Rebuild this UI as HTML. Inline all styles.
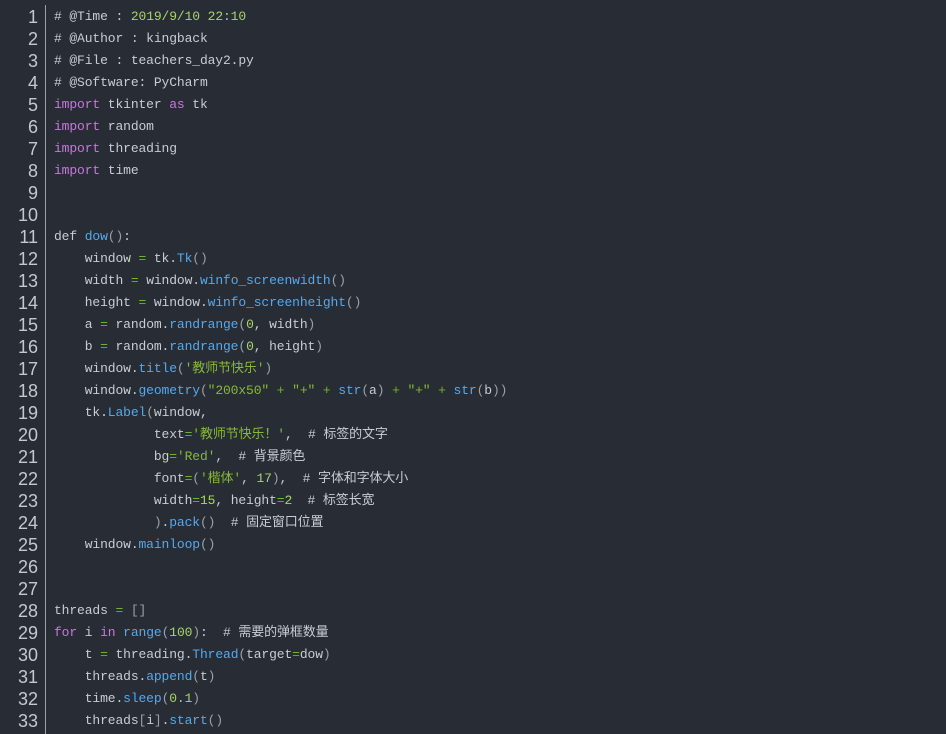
<!DOCTYPE html><html><head><meta charset="utf-8"><style>
body{margin:0;width:946px;height:734px;background:#282c34;overflow:hidden;font-family:"Liberation Mono","Noto Sans CJK SC",monospace;}
.g{position:absolute;left:0;top:6px;width:38px;text-align:right;color:#c5c8ce;font-family:"Liberation Sans",sans-serif;font-size:18px;}
.g div,.c div{height:22px;line-height:22px;white-space:pre}
.bar{position:absolute;left:45px;top:5px;width:1px;height:729px;background:#9aa0a8}
.c{position:absolute;left:54px;top:6px;color:#c7ccd5;font-size:13px;letter-spacing:-0.12px}
.k{color:#c678dd}.f{color:#55a9ee}.s{color:#86b936}.n{color:#a8d46b}.o{color:#6db52b}.p{color:#9aa0a8}
</style></head><body>
<div class="g"><div>1</div><div>2</div><div>3</div><div>4</div><div>5</div><div>6</div><div>7</div><div>8</div><div>9</div><div>10</div><div>11</div><div>12</div><div>13</div><div>14</div><div>15</div><div>16</div><div>17</div><div>18</div><div>19</div><div>20</div><div>21</div><div>22</div><div>23</div><div>24</div><div>25</div><div>26</div><div>27</div><div>28</div><div>29</div><div>30</div><div>31</div><div>32</div><div>33</div></div>
<div class="bar"></div>
<div class="c">
<div># @Time : <span class="n">2019/9/10 22:10</span></div>
<div># @Author : kingback</div>
<div># @File : teachers_day2.py</div>
<div># @Software: PyCharm</div>
<div><span class="k">import</span> tkinter <span class="k">as</span> tk</div>
<div><span class="k">import</span> random</div>
<div><span class="k">import</span> threading</div>
<div><span class="k">import</span> time</div>
<div></div>
<div></div>
<div>def <span class="f">dow</span><span class="p">()</span>:</div>
<div>    window <span class="o">=</span> tk.<span class="f">Tk</span><span class="p">()</span></div>
<div>    width <span class="o">=</span> window.<span class="f">winfo_screenwidth</span><span class="p">()</span></div>
<div>    height <span class="o">=</span> window.<span class="f">winfo_screenheight</span><span class="p">()</span></div>
<div>    a <span class="o">=</span> random.<span class="f">randrange</span><span class="p">(</span><span class="n">0</span>, width<span class="p">)</span></div>
<div>    b <span class="o">=</span> random.<span class="f">randrange</span><span class="p">(</span><span class="n">0</span>, height<span class="p">)</span></div>
<div>    window.<span class="f">title</span><span class="p">(</span><span class="s">'教师节快乐'</span><span class="p">)</span></div>
<div>    window.<span class="f">geometry</span><span class="p">(</span><span class="s">"200x50"</span> <span class="o">+</span> <span class="s">"+"</span> <span class="o">+</span> <span class="f">str</span><span class="p">(</span>a<span class="p">)</span> <span class="o">+</span> <span class="s">"+"</span> <span class="o">+</span> <span class="f">str</span><span class="p">(</span>b<span class="p">))</span></div>
<div>    tk.<span class="f">Label</span><span class="p">(</span>window,</div>
<div>             text<span class="o">=</span><span class="s">'教师节快乐！'</span>,  # 标签的文字</div>
<div>             bg<span class="o">=</span><span class="s">'Red'</span>,  # 背景颜色</div>
<div>             font<span class="o">=</span><span class="p">(</span><span class="s">'楷体'</span>, <span class="n">17</span><span class="p">)</span>,  # 字体和字体大小</div>
<div>             width<span class="o">=</span><span class="n">15</span>, height<span class="o">=</span><span class="n">2</span>  # 标签长宽</div>
<div>             <span class="p">)</span>.<span class="f">pack</span><span class="p">()</span>  # 固定窗口位置</div>
<div>    window.<span class="f">mainloop</span><span class="p">()</span></div>
<div></div>
<div></div>
<div>threads <span class="o">=</span> <span class="p">[]</span></div>
<div><span class="k">for</span> i <span class="k">in</span> <span class="f">range</span><span class="p">(</span><span class="n">100</span><span class="p">)</span>:  # 需要的弹框数量</div>
<div>    t <span class="o">=</span> threading.<span class="f">Thread</span><span class="p">(</span>target<span class="o">=</span>dow<span class="p">)</span></div>
<div>    threads.<span class="f">append</span><span class="p">(</span>t<span class="p">)</span></div>
<div>    time.<span class="f">sleep</span><span class="p">(</span><span class="n">0.1</span><span class="p">)</span></div>
<div>    threads<span class="p">[</span>i<span class="p">]</span>.<span class="f">start</span><span class="p">()</span></div>
</div>
</body></html>
